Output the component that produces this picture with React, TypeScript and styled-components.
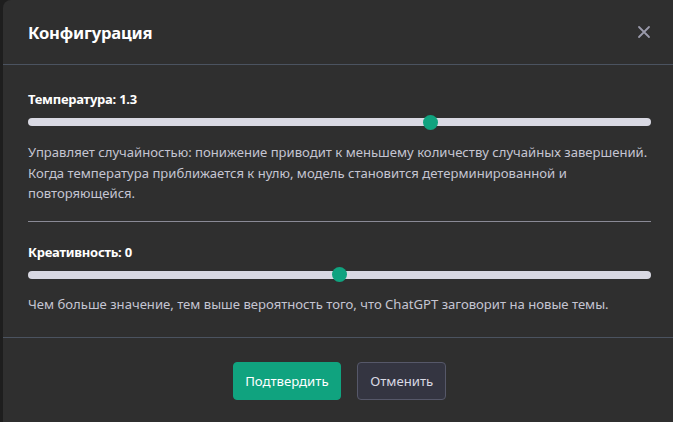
import React, { useState } from "react";
import styled, { createGlobalStyle } from "styled-components";

const Global = createGlobalStyle`
  html, body { margin: 0; padding: 0; overflow: hidden; background: #1e1e1e; }
  body { font-family: "Noto Sans", "Open Sans", sans-serif; }
  * { box-sizing: border-box; }
`;

const Dialog = styled.div`
  margin-left: 3px;
  width: 690px;
  height: 440px;
  background: #2f2f2f;
  border-radius: 8px 8px 0 0;
  display: flex;
  flex-direction: column;
`;

const Header = styled.div`
  height: 65px;
  padding: 0 42px 0 25px;
  display: flex;
  align-items: center;
  justify-content: space-between;
  border-bottom: 1px solid #4b5360;
`;

const Title = styled.h2`
  margin: 0;
  font-size: 16.6px;
  font-weight: 700;
  color: #ffffff;
  letter-spacing: -0.2px;
`;

const CloseButton = styled.button`
  background: none;
  border: none;
  padding: 0;
  margin-right: -1px;
  width: 16px;
  height: 16px;
  display: flex;
  align-items: center;
  justify-content: center;
  color: #9a9aab;
  cursor: pointer;
`;

const Body = styled.div`
  padding: 24px 42px 23px 25px;
  display: flex;
  flex-direction: column;
  border-bottom: 1px solid #4b5360;
`;

const Field = styled.div`
  display: flex;
  flex-direction: column;
`;

const Label = styled.label`
  font-size: 13px;
  font-weight: 700;
  color: #ffffff;
  line-height: 20px;
  letter-spacing: -0.25px;
`;

const Range = styled.input`
  -webkit-appearance: none;
  appearance: none;
  width: 100%;
  height: 16px;
  margin: 5px 0 0;
  background: transparent;
  cursor: pointer;

  &::-webkit-slider-runnable-track {
    height: 8px;
    border-radius: 4px;
    background: #d9d9e3;
  }
  &::-webkit-slider-thumb {
    -webkit-appearance: none;
    width: 15px;
    height: 15px;
    border-radius: 50%;
    background: #10a37f;
    margin-top: -3.5px;
    border: none;
  }
`;

const Hint = styled.p<{ $top: number }>`
  margin: ${(p) => p.$top}px -10px 0 0;
  font-size: 13.1px;
  line-height: 20.5px;
  color: #c5c5d2;
`;

const Divider = styled.hr`
  border: none;
  border-top: 1px solid #8a8a96;
  margin: 17px 0 20px;
  width: 100%;
`;

const Footer = styled.div`
  padding: 24px 42px 0 25px;
  display: flex;
  justify-content: center;
  gap: 16px;
`;

const Button = styled.button<{ $primary?: boolean }>`
  height: 38px;
  padding: 0 ${(p) => (p.$primary ? 11.5 : 12)}px;
  border-radius: 4px;
  font-family: inherit;
  font-size: 13.2px;
  cursor: pointer;
  background: ${(p) => (p.$primary ? "#10a37f" : "#343541")};
  color: ${(p) => (p.$primary ? "#ffffff" : "#d9d9e3")};
  border: 1px solid ${(p) => (p.$primary ? "#10a37f" : "#565869")};
`;

export default function App() {
  const [temp, setTemp] = useState(1.3);
  const [creativity, setCreativity] = useState(0);

  return (
    <>
      <Global />
      <Dialog>
        <Header>
          <Title>Конфигурация</Title>
          <CloseButton aria-label="Закрыть">
            <svg width="14" height="14" viewBox="0 0 14 14" fill="none" stroke="currentColor" strokeWidth="1.8" strokeLinecap="round">
              <path d="M2 2 L12 12 M12 2 L2 12" />
            </svg>
          </CloseButton>
        </Header>
        <Body>
          <Field>
            <Label>Температура: {temp}</Label>
            <Range
              type="range"
              min={0}
              max={2}
              step={0.1}
              value={temp}
              onChange={(e) => setTemp(Number(e.target.value))}
            />
            <Hint $top={12}>
              Управляет случайностью: понижение приводит к меньшему количеству случайных завершений.
              Когда температура приближается к нулю, модель становится детерминированной и
              повторяющейся.
            </Hint>
          </Field>
          <Divider />
          <Field>
            <Label>Креативность: {creativity}</Label>
            <Range
              type="range"
              min={-2}
              max={2}
              step={0.1}
              value={creativity}
              onChange={(e) => setCreativity(Number(e.target.value))}
            />
            <Hint $top={11}>
              Чем больше значение, тем выше вероятность того, что ChatGPT заговорит на новые темы.
            </Hint>
          </Field>
        </Body>
        <Footer>
          <Button $primary>Подтвердить</Button>
          <Button>Отменить</Button>
        </Footer>
      </Dialog>
    </>
  );
}
